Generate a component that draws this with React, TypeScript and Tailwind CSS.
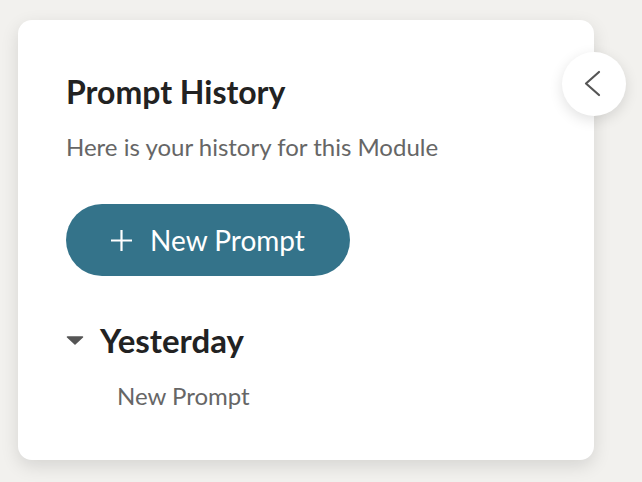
export default function App() {
  return (
    <div className="w-[642px] h-[482px] bg-[#f2f1ee] pl-[18px] pt-[20px] font-['Lato',sans-serif]">
      <div className="relative w-[576px] h-[440px] bg-white rounded-[14px] shadow-[0_6px_18px_rgba(0,0,0,0.12)] pl-[48px] pt-[53px]">
        <h1 className="text-[32px] font-bold text-[#222] leading-[38px]">Prompt History</h1>
        <p className="mt-[21px] text-[24px] text-[#666] leading-[29px]">Here is your history for this Module</p>

        <button
          type="button"
          className="mt-[43px] w-[284px] h-[72px] rounded-full bg-[#34738a] flex items-center justify-center gap-[18px] text-white text-[28px]"
        >
          <svg width="21" height="21" viewBox="0 0 21 21" className="shrink-0">
            <path d="M10.5 0 V21 M0 10.5 H21" stroke="#fff" strokeWidth="2.2" fill="none" />
          </svg>
          <span className="leading-[34px]">New Prompt</span>
        </button>

        <div className="mt-[44px] flex items-center h-[40px]">
          <svg width="18" height="9" viewBox="0 0 18 9">
            <path d="M1.5 1 L16.5 1 L9 8 Z" fill="#555" stroke="#555" strokeLinejoin="round" strokeWidth="1.5" />
          </svg>
          <span className="ml-[16px] text-[33px] font-bold text-[#222] leading-[40px]">Yesterday</span>
        </div>
        <div className="mt-[21px] pl-[51px] text-[24px] text-[#666] leading-[29px]">New Prompt</div>

        {/* collapse toggle */}
        <button
          type="button"
          className="absolute right-[-32px] top-[32px] w-[64px] h-[64px] rounded-full bg-white shadow-[0_4px_14px_rgba(0,0,0,0.12)] flex items-center justify-center"
        >
          <svg width="64" height="64" viewBox="0 0 64 64" fill="none">
            <path d="M37 20 L24 31.5 L37 43" stroke="#555" strokeWidth="2.2" strokeLinecap="round" strokeLinejoin="round" />
          </svg>
        </button>
      </div>
    </div>
  )
}
